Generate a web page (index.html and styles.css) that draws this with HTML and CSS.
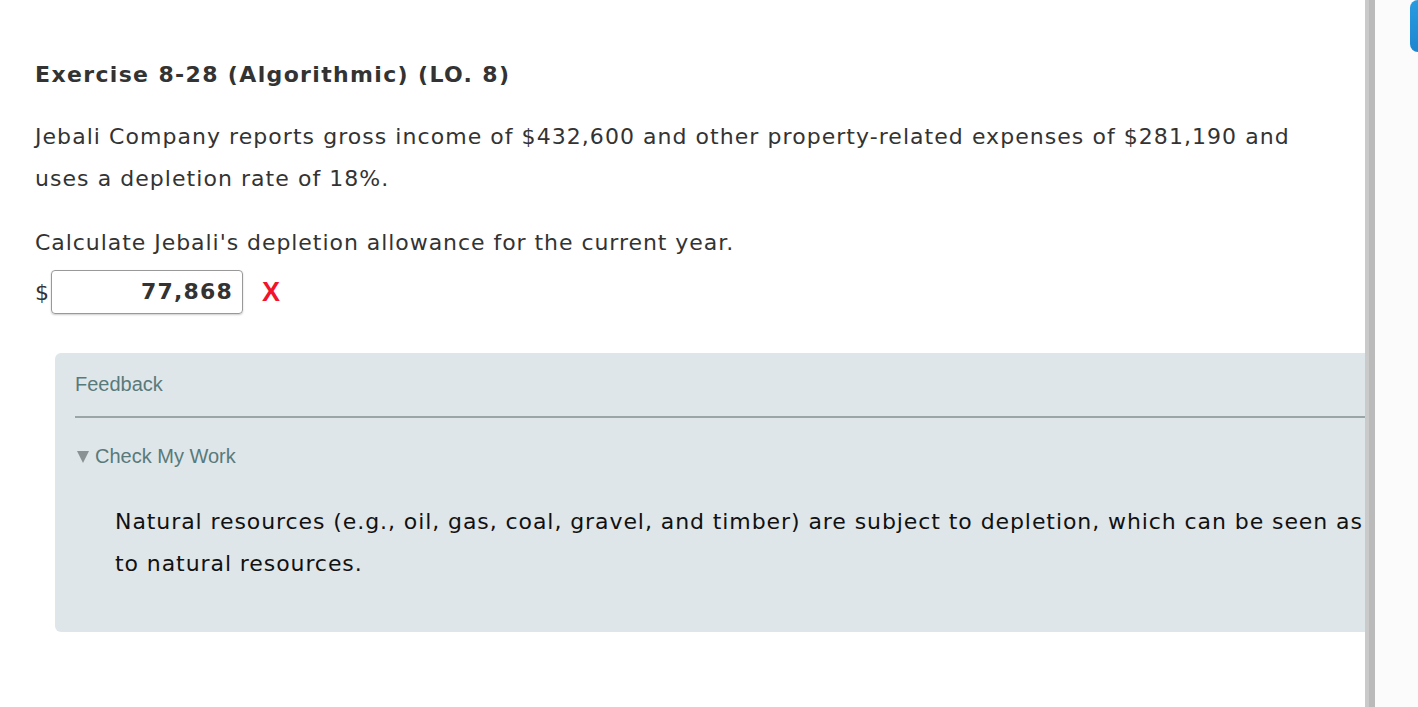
FILE: index.html
```html
<!DOCTYPE html>
<html>
<head>
<meta charset="utf-8">
<link rel="stylesheet" href="styles.css">
</head>
<body>
<div class="frame">
  <div class="main">
    <h1 class="title">Exercise 8-28 (Algorithmic) (LO. 8)</h1>
    <p class="para">Jebali Company reports gross income of $432,600 and other property-related expenses of $281,190 and uses a depletion rate of 18%.</p>
    <p class="para question">Calculate Jebali's depletion allowance for the current year.</p>
    <div class="answer">
      <span class="dollar">$</span>
      <div class="input">77,868</div>
      <span class="wrong">X</span>
    </div>
    <div class="feedback">
      <div class="fb-title">Feedback</div>
      <div class="fb-rule"></div>
      <div class="fb-toggle"><span class="tri"></span>Check My Work</div>
      <p class="fb-body">Natural resources (e.g., oil, gas, coal, gravel, and timber) are subject to depletion, which can be seen as a form of depreciation applicable to natural resources.</p>
    </div>
  </div>
  <div class="scrollbar"><div class="sb-light"></div><div class="sb-dark"></div></div>
  <div class="side"><div class="tab"></div></div>
</div>
</body>
</html>
```
FILE: styles.css
```css
html, body { margin: 0; padding: 0; background: #fff; }
.frame { display: flex; width: 1418px; height: 707px; overflow: hidden; }
.main { width: 1365px; flex: none; overflow: hidden; padding-left: 35px; box-sizing: border-box; font-family: "DejaVu Sans", Verdana, sans-serif; color: #333; }
.title { margin: 59px 0 0; font-size: 22px; font-weight: bold; line-height: 32px; color: #333; white-space: nowrap; letter-spacing: 1.35px; }
.para { margin: 25px 0 0; font-size: 22px; line-height: 42px; width: 1310px; letter-spacing: 1.05px; }
.question { margin-top: 22px; letter-spacing: 0.95px; }
.answer { display: flex; align-items: center; margin-top: 5px; height: 46px; }
.dollar { font-size: 22px; width: 16px; }
.input { width: 192px; height: 44px; box-sizing: border-box; border: 1px solid #999; border-radius: 4px; box-shadow: 0 1px 2px rgba(0,0,0,0.2); font-weight: bold; font-size: 22px; letter-spacing: 1.2px; text-align: right; padding-right: 9px; line-height: 42px; color: #333; }
.wrong { color: #f2142a; font-family: "Liberation Sans", Arial, sans-serif; font-size: 27px; font-weight: bold; margin-left: 19px; line-height: 30px; }
.feedback { margin-top: 38px; margin-left: 20px; width: 1900px; height: 279px; background: #dfe6e9; border-radius: 6px; padding: 18px 0 0 20px; box-sizing: border-box; }
.fb-title { font-family: "Liberation Sans", Arial, sans-serif; font-size: 20px; color: #587a7b; line-height: 26px; }
.fb-rule { height: 2px; background: #9aa5a8; margin-top: 19px; width: 1400px; }
.fb-toggle { font-family: "Liberation Sans", Arial, sans-serif; font-size: 20px; color: #587a7b; margin-top: 25px; line-height: 26px; display: flex; align-items: center; }
.tri { width: 0; height: 0; border-left: 6.5px solid transparent; border-right: 6.5px solid transparent; border-top: 12px solid #8b9294; margin: 1px 6px 0 2px; }
.fb-body { font-size: 22px; line-height: 42px; color: #111; margin: 32px 0 0 40px; width: 1665px; letter-spacing: 0.92px; }
.scrollbar { width: 10px; flex: none; display: flex; }
.sb-light { width: 4px; background: #cacaca; }
.sb-dark { width: 6px; background: #bababa; }
.side { flex: 1; background: #fbfbfb; display: flex; justify-content: flex-end; }
.tab { width: 8px; height: 52px; background: linear-gradient(#2a9be0, #1c86cf); border-radius: 8px 0 0 8px; }
```
